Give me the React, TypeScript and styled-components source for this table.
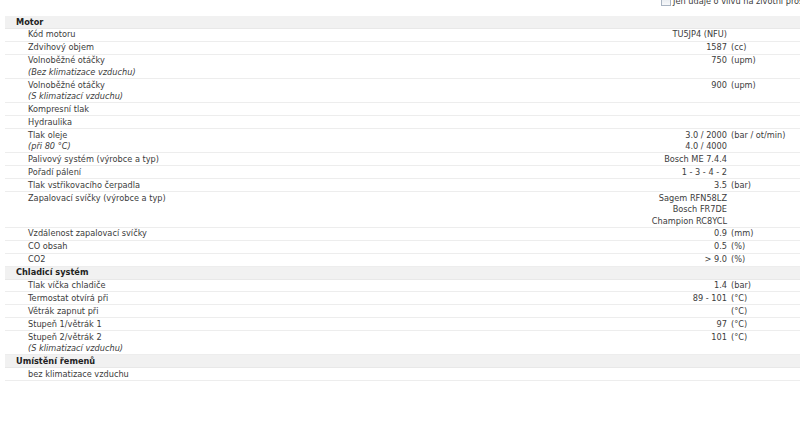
import React from "react";
import styled, { createGlobalStyle } from "styled-components";

const GlobalStyle = createGlobalStyle`
  html, body {
    margin: 0;
    padding: 0;
    background: #ffffff;
    overflow: hidden;
  }
  body {
    font-family: "DejaVu Sans", Verdana, sans-serif;
    font-size: 8.2px;
    color: #3c3c3c;
  }
`;

const Page = styled.div`
  width: 800px;
  height: 443px;
  padding-left: 5px;
  box-sizing: border-box;
`;

const TopBar = styled.div`
  display: flex;
  align-items: center;
  justify-content: flex-start;
  padding-left: 656px;
  margin-top: -5px;
  height: 12px;
  white-space: nowrap;
  overflow: hidden;
  margin-bottom: 9px;
`;

const CheckBox = styled.span`
  display: inline-block;
  flex: none;
  width: 8px;
  height: 8px;
  border: 1px solid #a9b4c2;
  background: linear-gradient(#e3e7ec, #f7f8fa);
  margin-right: 2px;
`;

const Table = styled.div`
  display: flex;
  flex-direction: column;
`;

const Section = styled.div`
  background: #f1f1f1;
  border-bottom: 1px solid #e8e8e8;
  font-weight: bold;
  color: #222;
  line-height: 11.4px;
  padding: 0.5px 0 0 11px;
`;

const Row = styled.div`
  display: grid;
  grid-template-columns: 1fr 140px 69px;
  border-bottom: 1px solid #ededed;
  line-height: 11.4px;
  padding-top: 0.5px;
`;

const Label = styled.div`
  padding-left: 23px;
`;

const Note = styled.div`
  font-style: italic;
`;

const Value = styled.div`
  text-align: right;
  padding-right: 4px;
  white-space: nowrap;
`;

const Unit = styled.div`
  white-space: nowrap;
`;

type Item = {
  label: string;
  note?: string;
  values?: string[];
  unit?: string;
};

type Group = { title: string; items: Item[] };

const groups: Group[] = [
  {
    title: "Motor",
    items: [
      { label: "Kód motoru", values: ["TU5JP4 (NFU)"] },
      { label: "Zdvihový objem", values: ["1587"], unit: "(cc)" },
      {
        label: "Volnoběžné otáčky",
        note: "(Bez klimatizace vzduchu)",
        values: ["750"],
        unit: "(upm)",
      },
      {
        label: "Volnoběžné otáčky",
        note: "(S klimatizací vzduchu)",
        values: ["900"],
        unit: "(upm)",
      },
      { label: "Kompresní tlak" },
      { label: "Hydraulika" },
      {
        label: "Tlak oleje",
        note: "(při 80 °C)",
        values: ["3.0 / 2000", "4.0 / 4000"],
        unit: "(bar / ot/min)",
      },
      { label: "Palivový systém (výrobce a typ)", values: ["Bosch ME 7.4.4"] },
      { label: "Pořadí pálení", values: ["1 - 3 - 4 - 2"] },
      { label: "Tlak vstřikovacího čerpadla", values: ["3.5"], unit: "(bar)" },
      {
        label: "Zapalovací svíčky (výrobce a typ)",
        values: ["Sagem RFN58LZ", "Bosch FR7DE", "Champion RC8YCL"],
      },
      { label: "Vzdálenost zapalovací svíčky", values: ["0.9"], unit: "(mm)" },
      { label: "CO obsah", values: ["0.5"], unit: "(%)" },
      { label: "CO2", values: ["> 9.0"], unit: "(%)" },
    ],
  },
  {
    title: "Chladicí systém",
    items: [
      { label: "Tlak víčka chladiče", values: ["1.4"], unit: "(bar)" },
      { label: "Termostat otvírá při", values: ["89 - 101"], unit: "(°C)" },
      { label: "Větrák zapnut při", values: [""], unit: "(°C)" },
      { label: "Stupeň 1/větrák 1", values: ["97"], unit: "(°C)" },
      {
        label: "Stupeň 2/větrák 2",
        note: "(S klimatizací vzduchu)",
        values: ["101"],
        unit: "(°C)",
      },
    ],
  },
  {
    title: "Umístění řemenů",
    items: [{ label: "bez klimatizace vzduchu" }],
  },
];

const App = () => (
  <Page>
    <GlobalStyle />
    <TopBar>
      <CheckBox />
      Jen údaje o vlivu na životní prostředí
    </TopBar>
    <Table>
      {groups.map((g) => (
        <React.Fragment key={g.title}>
          <Section>{g.title}</Section>
          {g.items.map((it, i) => (
            <Row key={g.title + i}>
              <Label>
                {it.label}
                {it.note && <Note>{it.note}</Note>}
              </Label>
              <Value>
                {(it.values || []).map((v, j) => (
                  <div key={j}>{v || "\u00a0"}</div>
                ))}
              </Value>
              <Unit>{it.unit}</Unit>
            </Row>
          ))}
        </React.Fragment>
      ))}
    </Table>
  </Page>
);

export default App;
